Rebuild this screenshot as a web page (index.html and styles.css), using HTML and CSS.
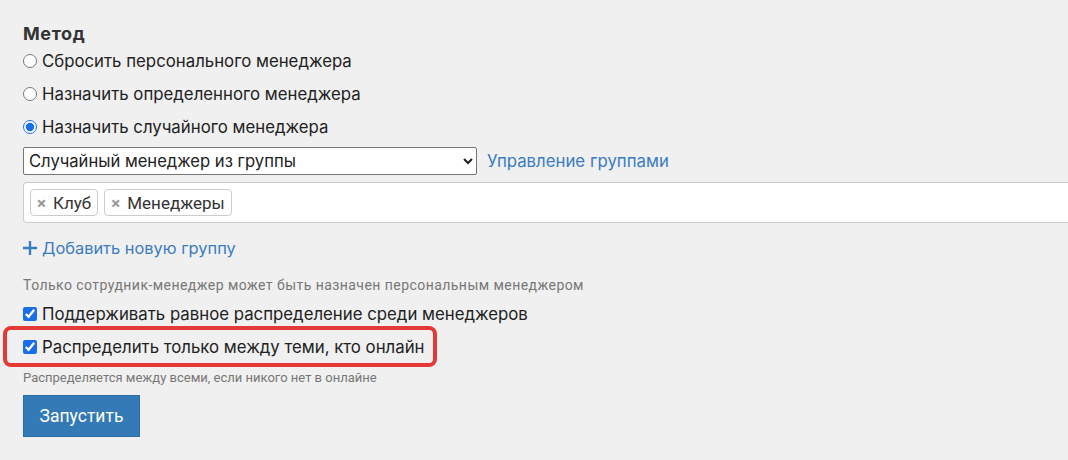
FILE: index.html
```html
<!doctype html>
<html lang="ru">

<head>
    <meta charset="UTF-8" />
    <meta name="viewport" content="width=device-width, initial-scale=1.0" />
    <title>Метод</title>
    <link rel="stylesheet" href="styles.css">
</head>

<body>
    <div class="form">
        <div class="title">Метод</div>

        <label class="option">
            <input type="radio" name="method" />
            <span>Сбросить персонального менеджера</span>
        </label>
        <label class="option">
            <input type="radio" name="method" />
            <span>Назначить определенного менеджера</span>
        </label>
        <label class="option">
            <input type="radio" name="method" checked />
            <span>Назначить случайного менеджера</span>
        </label>

        <div class="select-row">
            <select class="select">
                <option>Случайный менеджер из группы</option>
            </select>
            <a href="#" class="link">Управление группами</a>
        </div>

        <div class="tags">
            <span class="tag"><span class="tag-x">×</span>Клуб</span>
            <span class="tag"><span class="tag-x">×</span>Менеджеры</span>
        </div>

        <a href="#" class="add-link">
            <svg class="plus" width="14" height="14" viewBox="0 0 14 14">
                <path d="M7 0v14M0 7h14" stroke="currentColor" stroke-width="2.4" fill="none" />
            </svg>
            Добавить новую группу
        </a>

        <div class="hint hint-wide">Только сотрудник-менеджер может быть назначен персональным менеджером</div>

        <label class="check check-first">
            <input type="checkbox" checked />
            <span>Поддерживать равное распределение среди менеджеров</span>
        </label>
        <div class="highlight">
            <label class="check">
                <input type="checkbox" checked />
                <span>Распределить только между теми, кто онлайн</span>
            </label>
        </div>
        <div class="hint hint-small">Распределяется между всеми, если никого нет в онлайне</div>

        <button class="btn">Запустить</button>
    </div>
</body>

</html>
```

FILE: styles.css
```css
body {
    margin: 0;
    background: #f0f0f0;
    font-family: Inter, "Noto Sans", sans-serif;
    color: #222;
}

.form {
    padding: 24px 0 0 23px;
}

.title {
    font-weight: 700;
    font-size: 18px;
    letter-spacing: 0.6px;
    line-height: 20px;
    color: #333;
}

.option {
    display: flex;
    align-items: center;
    height: 33px;
    font-size: 16.8px;
    color: #222;
}

.option input,
.check input {
    width: 14px;
    height: 14px;
    margin: 0 5px 0 0;
    accent-color: #1a6fe8;
}

.select-row {
    display: flex;
    align-items: center;
    margin-top: 4px;
}

.select {
    width: 454px;
    height: 28px;
    font-family: Inter, sans-serif;
    font-size: 16.6px;
    color: #222;
    border: 1px solid #767676;
    border-radius: 2px;
    background: #fff;
    padding: 0 0 0 1px;
}

.link {
    margin-left: 10px;
    color: #3a7cc0;
    text-decoration: none;
    font-size: 16.8px;
}

.tags {
    margin-top: 7px;
    height: 39px;
    background: #fff;
    border: 1px solid #ccc;
    border-right: none;
    border-radius: 4px 0 0 4px;
    display: flex;
    align-items: center;
    padding-left: 6px;
    gap: 6px;
}

.tag {
    display: inline-flex;
    align-items: center;
    height: 25px;
    padding: 0 6px;
    border: 1px solid #ccc;
    border-radius: 4px;
    background: #fff;
    font-family: Roboto, "Liberation Sans", sans-serif;
    font-size: 17px;
    color: #333;
}

.tag-x {
    color: #999;
    font-weight: 700;
    font-size: 17px;
    margin-right: 7px;
}

.add-link {
    display: flex;
    align-items: center;
    gap: 5px;
    margin-top: 14px;
    height: 22px;
    color: #3a7cc0;
    text-decoration: none;
    font-size: 16.4px;
}

.hint {
    font-family: Roboto, "Liberation Sans", sans-serif;
    color: #777;
    line-height: 18px;
}

.hint-wide {
    margin-top: 17px;
    font-size: 14px;
    letter-spacing: 0.45px;
}

.check {
    display: flex;
    align-items: center;
    height: 24px;
    font-size: 16.8px;
    color: #222;
}

.check-first {
    margin-top: 8px;
}

.highlight {
    margin: 0 0 0 -20px;
    width: 410px;
    height: 33px;
    border: 4px solid #e53935;
    border-radius: 8px;
    padding-left: 16px;
    display: flex;
    align-items: center;
}

.hint-small {
    margin-top: 2px;
    font-size: 13px;
}

.btn {
    display: block;
    margin-top: 8px;
    width: 117px;
    height: 42px;
    background: #337ab7;
    color: #fff;
    border: 1px solid #2e6da4;
    font-family: Roboto, "Liberation Sans", sans-serif;
    font-size: 17.5px;
    cursor: pointer;
}
```
